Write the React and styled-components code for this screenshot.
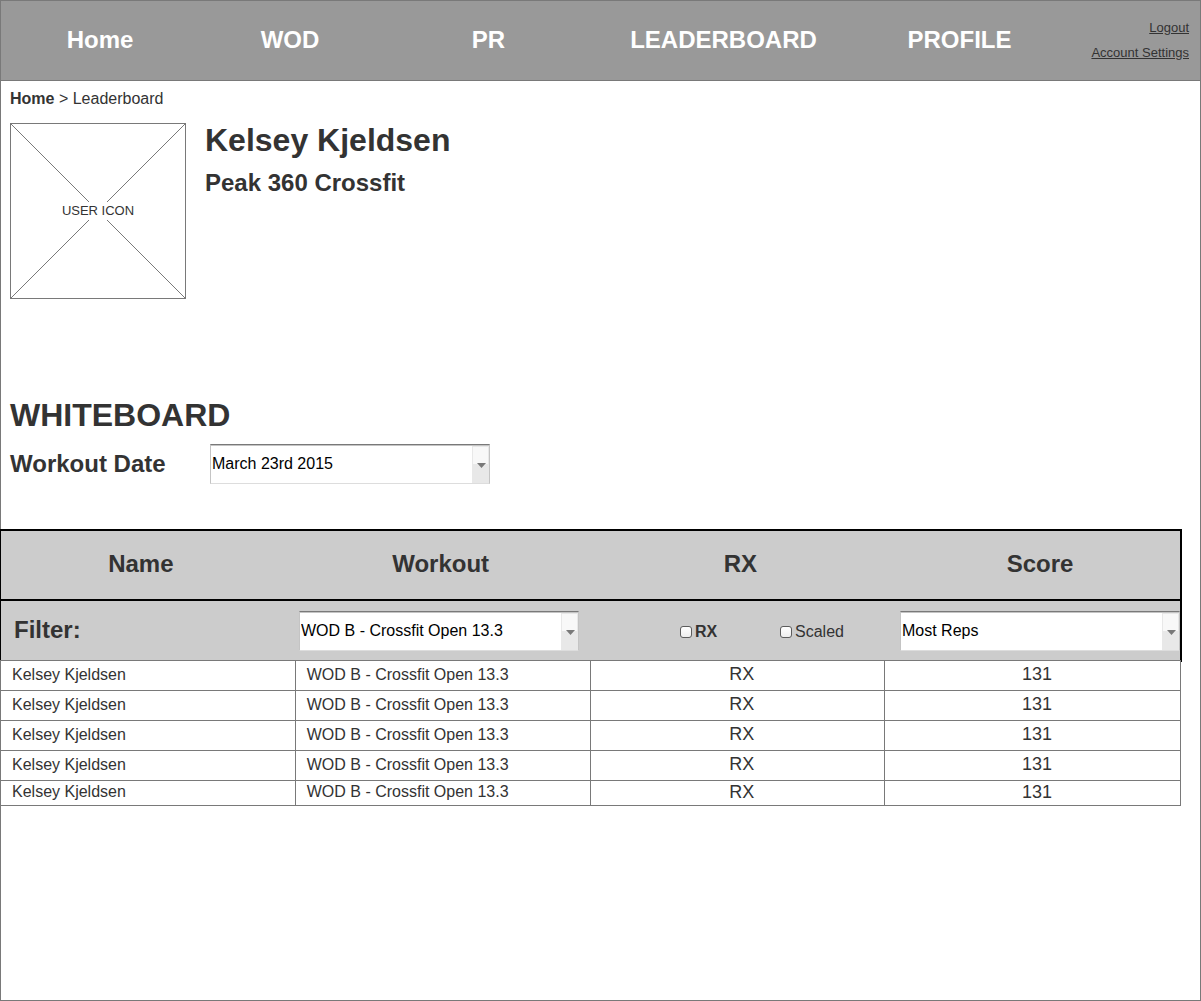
import React from 'react';
import styled, { createGlobalStyle } from 'styled-components';

const LINE = '#797979';
const INK = '#333333';

const GlobalStyle = createGlobalStyle`
  *, *::before, *::after { box-sizing: border-box; }
  body {
    margin: 0;
    background: #ffffff;
    color: ${INK};
    font-family: "Liberation Sans", Arial, Helvetica, sans-serif;
    font-size: 16px;
    line-height: 18px;
  }
  h1, h2, h3, p { margin: 0; }
`;

const Page = styled.div`
  min-height: 100vh;
  border: 1px solid ${LINE};
`;

const Header = styled.header`
  display: flex;
  height: 80px;
  padding: 0 11px 2px 0;
  background: #999999;
  border-bottom: 1px solid ${LINE};
`;

const Nav = styled.nav`
  flex: 1;
  display: grid;
  grid-template-columns: 198fr 182fr 215fr 255fr 217fr;
  align-items: center;
  justify-items: center;
`;

const NavLink = styled.a`
  color: #ffffff;
  font-size: 24px;
  font-weight: bold;
  line-height: 28px;
  text-decoration: none;
`;

const Account = styled.div`
  display: flex;
  flex-direction: column;
  align-items: flex-end;
  justify-content: center;
  gap: 10px;
  width: 121px;
`;

const AccountLink = styled.a`
  color: ${INK};
  font-size: 13px;
  line-height: 15px;
`;

const Section = styled.section`
  padding: 0 9px;
`;

const Breadcrumb = styled.nav`
  padding: 9px 9px 15px;
  a {
    color: inherit;
    font-weight: bold;
    text-decoration: none;
  }
`;

const Profile = styled(Section)`
  display: flex;
  gap: 19px;
`;

const Avatar = styled.div`
  display: grid;
  place-items: center;
  width: 176px;
  height: 176px;
  > * { grid-area: 1 / 1; }
`;

const AvatarLabel = styled.span`
  background: #ffffff;
  font-size: 13px;
  line-height: 18px;
`;

const Title = styled.h1`
  font-size: 32px;
  line-height: 35px;
`;

const Subtitle = styled.h2`
  font-size: 24px;
  line-height: 28px;
`;

const ProfileText = styled.div`
  display: flex;
  flex-direction: column;
  gap: 11px;
`;

const Whiteboard = styled(Section)`
  padding-top: 99px;
  padding-bottom: 45px;
`;

const DateRow = styled.div`
  display: flex;
  align-items: center;
  padding-top: 11px;
`;

const DateLabel = styled.label`
  width: 200px;
  font-size: 24px;
  font-weight: bold;
  line-height: 28px;
`;

const SelectBox = styled.div`
  position: relative;
  width: 280px;
  max-width: 100%;
  height: 40px;
`;

const NativeSelect = styled.select`
  appearance: none;
  display: block;
  width: 100%;
  height: 100%;
  margin: 0;
  padding: 0 20px 0 1px;
  border: 1px solid #c4c4c4;
  border-top-color: ${LINE};
  border-bottom-color: #dddddd;
  border-radius: 0;
  background: #ffffff;
  box-shadow: inset 0 1px 0 #c4c4c4;
  color: #000000;
  font: inherit;
`;

const SelectArrow = styled.svg`
  position: absolute;
  top: 2px;
  right: 1px;
  width: 17px;
  height: 37px;
  pointer-events: none;
`;

const Board = styled.table`
  display: block;
  width: calc(100% - 17px);
  margin-left: -1px;
`;

const BoardHead = styled.thead`
  display: block;
  border: 2px solid #000000;
  border-left-width: 1px;
  border-bottom: 0;
  background: #cccccc;
`;

const HeadRow = styled.tr`
  display: grid;
  grid-template-columns: repeat(4, 1fr);
  column-gap: 20px;
  align-items: center;
  height: ${(p) => (p.$filter ? '61px' : '70px')};
  padding-bottom: ${(p) => (p.$filter ? '1px' : '0')};
  border-bottom: ${(p) => (p.$filter ? '0' : '2px solid #000000')};
`;

const HeadCell = styled.th`
  padding: 0 0 2px;
  font-size: 24px;
  line-height: 28px;
`;

const FilterCell = styled.td`
  padding: 0;
`;

const FilterTitle = styled.th`
  padding: 0 13px 2px;
  font-size: 24px;
  line-height: 28px;
  text-align: left;
`;

const CheckGroup = styled.div`
  display: flex;
  padding: 2px 0 0 81px;
`;

const CheckLabel = styled.label`
  display: flex;
  align-items: center;
  gap: 3px;
  width: 100px;
  font-weight: ${(p) => (p.$strong ? 'bold' : 'normal')};
`;

const CheckBox = styled.input`
  appearance: none;
  width: 12px;
  height: 12px;
  margin: 0;
  border: 1px solid #5c5c5c;
  border-radius: 3px;
  background: linear-gradient(#ffffff, #ededed);
  &:checked { background: ${LINE}; }
`;

const BoardBody = styled.tbody`
  display: block;
  margin: -2px 1px 0 0;
  border: 1px solid ${LINE};
  border-bottom: 0;
`;

const DataRow = styled.tr`
  display: grid;
  grid-template-columns: repeat(4, 1fr);
  height: 30px;
  background: #ffffff;
  border-bottom: 1px solid ${LINE};
  &:last-child { height: 25px; }
`;

const DataCell = styled.td`
  display: flex;
  align-items: center;
  justify-content: ${(p) => (p.$center ? 'center' : 'flex-start')};
  padding: ${(p) => (p.$center ? '0 0 3px 9px' : '0 11px 2px')};
  border-right: 1px solid ${LINE};
  font-size: ${(p) => (p.$center ? '18px' : '16px')};
  &:last-child { border-right: 0; }
`;

function Select({ options, ...props }) {
  return (
    <SelectBox>
      <NativeSelect {...props}>
        {options.map((o) => <option key={o}>{o}</option>)}
      </NativeSelect>
      <SelectArrow viewBox="0 0 17 37" aria-hidden="true">
        <rect width="17" height="37" fill="#e8e8e8" />
        <rect x="1" y="1" width="15" height="17" fill="#f8f8f8" />
        <path d="M5 17h9l-4.500 5z" fill={LINE} />
      </SelectArrow>
    </SelectBox>
  );
}

const NAV = ['Home', 'WOD', 'PR', 'LEADERBOARD', 'PROFILE'];
const COLUMNS = ['Name', 'Workout', 'RX', 'Score'];
const RESULTS = Array.from({ length: 5 }, (_, id) => ({
  id,
  name: 'Kelsey Kjeldsen',
  workout: 'WOD B - Crossfit Open 13.3',
  rx: 'RX',
  score: 131,
}));

export default function App() {
  return (
    <>
      <GlobalStyle />
      <Page>
        <Header>
          <Nav>
            {NAV.map((item) => <NavLink key={item} href="#">{item}</NavLink>)}
          </Nav>
          <Account>
            <AccountLink href="#">Logout</AccountLink>
            <AccountLink href="#">Account Settings</AccountLink>
          </Account>
        </Header>

        <main>
          <Breadcrumb>
            <a href="#">Home</a> &gt; Leaderboard
          </Breadcrumb>

          <Profile>
            <Avatar>
              <svg width="176" height="176" fill="none" stroke={LINE} aria-hidden="true">
                <rect x="0.5" y="0.5" width="175" height="175" />
                <path d="M0.5 0.5l175 175M175.5 0.5l-175 175" />
              </svg>
              <AvatarLabel>USER ICON</AvatarLabel>
            </Avatar>
            <ProfileText>
              <Title>Kelsey Kjeldsen</Title>
              <Subtitle>Peak 360 Crossfit</Subtitle>
            </ProfileText>
          </Profile>

          <Whiteboard>
            <Title as="h2">WHITEBOARD</Title>
            <DateRow>
              <DateLabel htmlFor="date">Workout Date</DateLabel>
              <Select id="date" options={['March 23rd 2015']} />
            </DateRow>
          </Whiteboard>

          <Board cellSpacing="0">
            <BoardHead>
              <HeadRow>
                {COLUMNS.map((c) => <HeadCell key={c} scope="col">{c}</HeadCell>)}
              </HeadRow>
              <HeadRow $filter>
                <FilterTitle scope="row">Filter:</FilterTitle>
                <FilterCell>
                  <Select aria-label="Workout" options={['WOD B - Crossfit Open 13.3']} />
                </FilterCell>
                <FilterCell>
                  <CheckGroup>
                    <CheckLabel $strong><CheckBox type="checkbox" />RX</CheckLabel>
                    <CheckLabel><CheckBox type="checkbox" />Scaled</CheckLabel>
                  </CheckGroup>
                </FilterCell>
                <FilterCell>
                  <Select aria-label="Score" options={['Most Reps']} />
                </FilterCell>
              </HeadRow>
            </BoardHead>
            <BoardBody>
              {RESULTS.map((r) => (
                <DataRow key={r.id}>
                  <DataCell>{r.name}</DataCell>
                  <DataCell>{r.workout}</DataCell>
                  <DataCell $center>{r.rx}</DataCell>
                  <DataCell $center>{r.score}</DataCell>
                </DataRow>
              ))}
            </BoardBody>
          </Board>
        </main>
      </Page>
    </>
  );
}
